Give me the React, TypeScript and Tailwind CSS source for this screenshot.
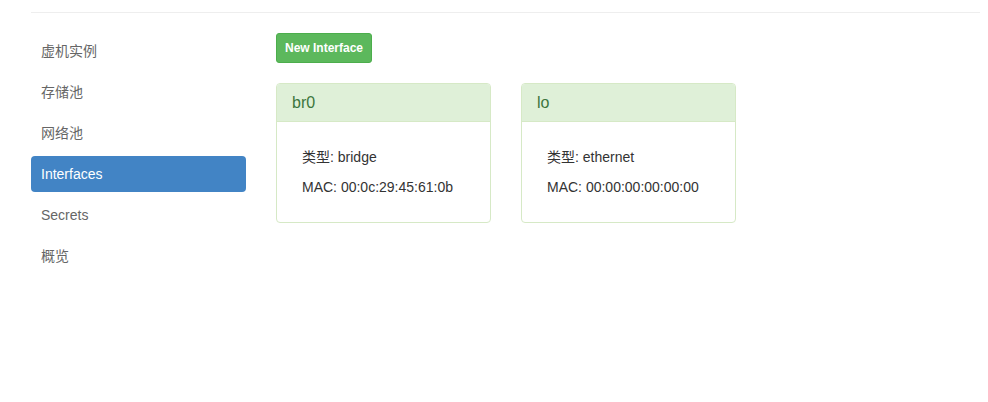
import React from "react";

const font = { fontFamily: '"Liberation Sans", Arial, "Noto Sans CJK SC", sans-serif' };

const navItems = ["虚机实例", "存储池", "网络池", "Interfaces", "Secrets", "概览"];

const ifaces = [
  { name: "br0", type: "bridge", mac: "00:0c:29:45:61:0b" },
  { name: "lo", type: "ethernet", mac: "00:00:00:00:00:00" },
];

export default function App() {
  return (
    <div className="w-[988px] h-[402px] bg-white text-[14px] text-[#333]" style={font}>
      <div className="pt-3 pl-[31px] pr-[8px]">
        <div className="h-px bg-[#eeeeee]" />
        <div className="flex pt-5">
          <div className="w-[215px] flex flex-col gap-[5px]">
            {navItems.map((n) => (
              <div
                key={n}
                className={
                  n === "Interfaces"
                    ? "h-[36px] px-[10px] flex items-center rounded-[4px] bg-[#4284c5] text-white"
                    : "h-[36px] px-[10px] flex items-center text-[#666]"
                }
              >
                {n}
              </div>
            ))}
          </div>
          <div className="ml-[30px] flex flex-col">
            <div>
              <button className="h-[30px] px-[8px] rounded-[3px] bg-[#5cb85c] border border-[#4cae4c] text-white text-[12px] font-bold leading-[18px]">
                New Interface
              </button>
            </div>
            <div className="flex gap-[30px] mt-[20px]">
              {ifaces.map((i) => (
                <div key={i.name} className="w-[215px] border border-[#d6e9c6] rounded-[4px] bg-white">
                  <div className="h-[38px] px-[15px] flex items-center bg-[#dff0d8] text-[#3c763d] text-[16px] border-b border-[#d6e9c6] rounded-t-[3px]">
                    {i.name}
                  </div>
                  <div className="p-[25px] flex flex-col gap-[10px] leading-[20px]">
                    <div>类型: {i.type}</div>
                    <div>MAC: {i.mac}</div>
                  </div>
                </div>
              ))}
            </div>
          </div>
        </div>
      </div>
    </div>
  );
}
